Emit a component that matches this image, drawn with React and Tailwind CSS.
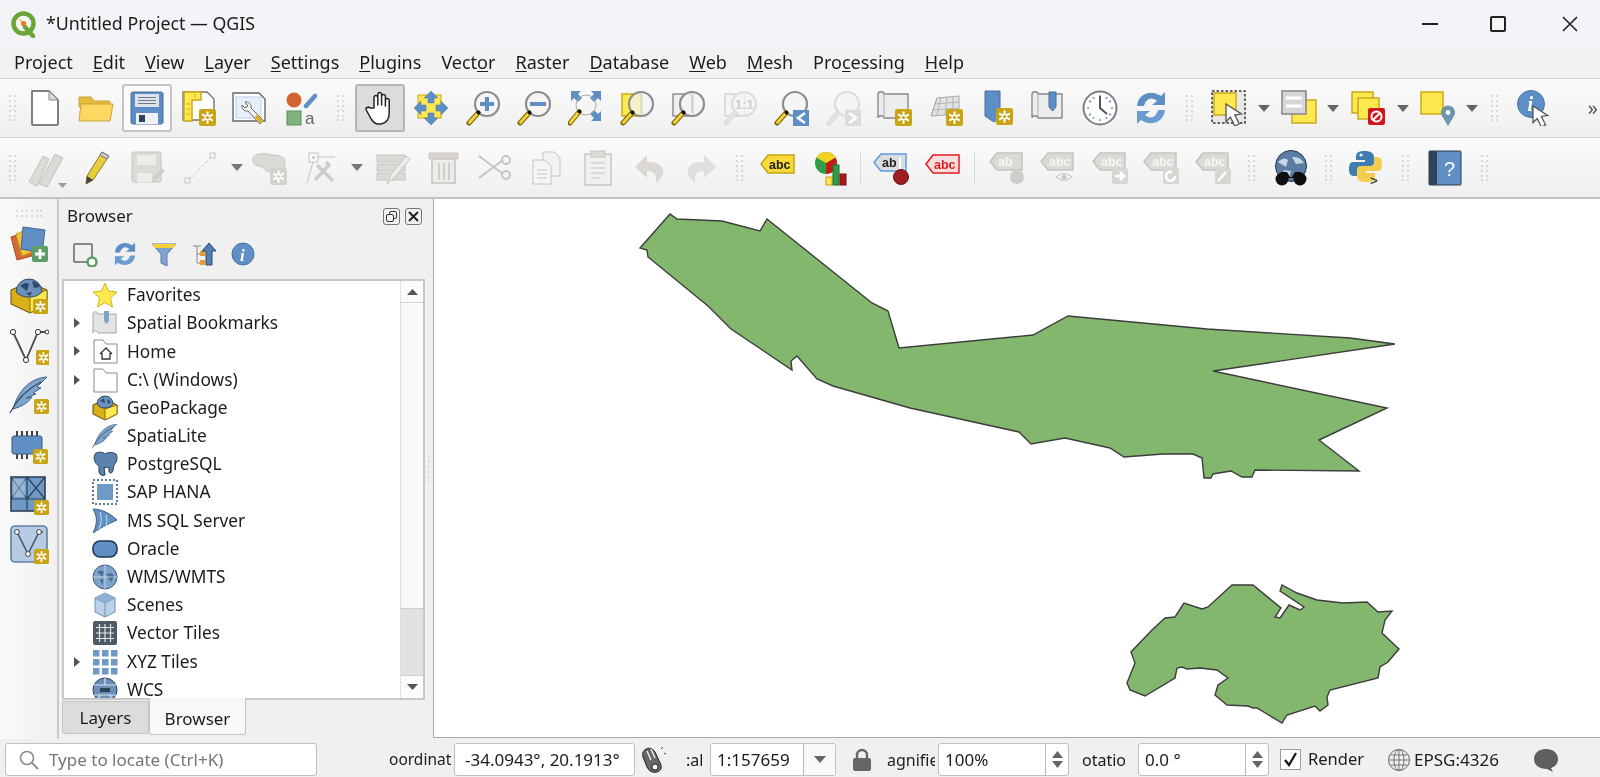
import React from 'react'

const YEL = '#fde84f'
const YEDGE = '#c7a512'
const GHOST = '#dcdad5'
const GEDGE = '#c6c4bf'

const Svg = ({ s = 36, children }) => (
  <svg width={s} height={s} viewBox={`0 0 ${s} ${s}`} className='block shrink-0'>{children}</svg>
)

// gold square with the white star used on every "new ..." icon
const Badge = ({ x = 19, y = 19, s = 16, c = '#c9a516' }) => (
  <g transform={`translate(${x} ${y}) scale(${s / 16})`}>
    <rect width='16' height='16' rx='2' fill={c} />
    <g stroke='#fff' strokeWidth='2' strokeLinecap='round'>
      <path d='M8 3v10M3.7 5.5l8.6 5M3.7 10.5l8.6-5' />
    </g>
    <circle cx='8' cy='8' r='2' fill={c} stroke='#fff' strokeWidth='1' />
  </g>
)

const Lens = ({ off, children, fill = '#f4f4f4' }) => (
  <g>
    {children}
    <circle cx='22' cy='14' r='12' fill={fill} fillOpacity='0.75' stroke={off ? '#dddcd8' : '#8c8c8c'} strokeWidth='2.2' />
    <path d='M13 23L4 33' stroke={off ? '#dddcd8' : '#7a6500'} strokeWidth='5' strokeLinecap='round' />
    <path d='M12.5 23.5L4.5 32.5' stroke={off ? '#e4e3df' : '#f5cf3c'} strokeWidth='3' strokeLinecap='round' />
    {!off && <circle cx='13.5' cy='22.5' r='2' fill='#111' />}
  </g>
)

const Arrowed = ({ d = '#666' }) => (
  <svg width='12' height='7' viewBox='0 0 12 7' className='block'><path d='M0 0h12L6 7z' fill={d} /></svg>
)

const Grip = () => (
  <svg width='8' height='26' viewBox='0 0 8 26' className='block'>
    {[1, 6, 11, 16, 21, 25].map((y) => [1, 6].map((x) => <circle key={`${x}${y}`} cx={x} cy={y} r='0.9' fill='#c9c9c9' />))}
  </svg>
)

const Globe = ({ s = 36, c = '#6a8fb8', dark = '#28405e' }) => (
  <Svg s={s}>
    <circle cx={s / 2} cy={s / 2} r={s / 2 - 1} fill={c} stroke={dark} strokeWidth='1' />
    <path d={`M${s * 0.2} ${s * 0.3}q${s * 0.15} -${s * 0.12} ${s * 0.25} 0l-${s * 0.05} ${s * 0.2}zM${s * 0.55} ${s * 0.4}q${s * 0.2} -${s * 0.1} ${s * 0.3} ${s * 0.05}l-${s * 0.12} ${s * 0.25}zM${s * 0.3} ${s * 0.6}l${s * 0.14} 0l-${s * 0.04} ${s * 0.22}z`} fill={dark} opacity='0.75' />
    <path d={`M1 ${s / 2}h${s - 2}M${s / 2} 1v${s - 2}`} stroke='#dbe6f2' strokeWidth='0.7' />
  </Svg>
)

const Tag = ({ x = 4, y = 8, w = 30, h = 16, fill, stroke, text, tc }) => (
  <g>
    <path d={`M${x} ${y + h / 2}l7 -${h / 2}h${w - 7}v${h}h-${w - 7}z`} fill={fill} stroke={stroke} strokeWidth='1.5' />
    <text x={x + 8} y={y + h - 4} fontSize='12.5' fontWeight='700' fontFamily='"Liberation Sans", sans-serif' fill={tc}>{text}</text>
  </g>
)

const Cursor = ({ x = 18, y = 16, s = 1 }) => (
  <path transform={`translate(${x} ${y}) scale(${s})`} d='M0 0l14 9-6 1 4 8-4 2-4-8-4 4z' fill='#fff' stroke='#555' strokeWidth='1.2' />
)

const DocIcon = () => (
  <Svg>
    <path d='M5 1h17l9 9v24a1 1 0 0 1-1 1H6a1 1 0 0 1-1-1z' fill='#fff' stroke='#5a5a5a' strokeWidth='1.5' />
    <path d='M22 1v9h9z' fill='#d9d9d9' stroke='#8a8a8a' />
  </Svg>
)
const FolderIcon = () => (
  <Svg>
    <path d='M1 7h12l3 4h16v6H1z' fill='#e4bb3a' stroke='#c9a63a' />
    <path d='M3 14h32l-3 17H1z' fill='#fbd960' stroke='#c9a63a' />
  </Svg>
)
const FloppyIcon = () => (
  <Svg>
    <rect x='2' y='2' width='32' height='32' rx='2' fill='#5d8dc4' stroke='#4a6f9b' />
    <rect x='6' y='4' width='24' height='13' fill='#dfe3e8' />
    <path d='M9 7.5h18M9 10.5h18M9 13.5h18' stroke='#6d7a88' />
    <rect x='7' y='23' width='22' height='11' fill='#eef0f3' />
    <rect x='10' y='25' width='6' height='7' fill='#2e435c' />
  </Svg>
)
const LayoutIcon = () => (
  <Svg>
    <path d='M2 2h24l7 7v21H2z' fill='#fff' stroke='#777' strokeWidth='1.4' />
    <path d='M3 2h17v8H11v21H3z' fill={YEL} stroke={YEDGE} strokeWidth='1.4' />
    <path d='M6 14h3M6 19h3M6 24h3M14 4v3' stroke={YEDGE} />
    <Badge x='18' y='19' s='17' />
  </Svg>
)
const StyleIcon = () => (
  <Svg>
    <path d='M1 3h26l6 6v22H1z' fill='#fff' stroke='#666' strokeWidth='1.4' />
    <rect x='4' y='7' width='25' height='21' fill='#e6effa' stroke='#b9d0ea' />
    <path d='M13 12a5 5 0 0 1 6 6l12 12-3 4-12-13a5 5 0 0 1-6-6l3 3 3-2z' fill='#f3f3f3' stroke='#666' />
    <path d='M24 26l6 6' stroke='#d8b22e' strokeWidth='4' />
  </Svg>
)
const SymbolIcon = () => (
  <Svg>
    <circle cx='10' cy='10' r='7.5' fill='#d4632f' />
    <path d='M22 16l9-10' stroke='#5f8fc4' strokeWidth='4.5' strokeLinecap='round' />
    <rect x='3' y='21' width='14' height='14' fill='#7fb27c' stroke='#5e925b' />
    <text x='21' y='34' fontSize='17' fill='#666' fontFamily='"Liberation Sans", sans-serif'>a</text>
  </Svg>
)
const HandIcon = () => (
  <Svg>
    <path d='M12 18V7a2 2 0 0 1 3.8 0v8-11a2 2 0 0 1 3.8 0v11-9a2 2 0 0 1 3.8 0v10-6a2 2 0 0 1 3.8 0v13c0 7-3 10-8 11h-3c-3 0-5-2-7-5l-5-9c-1-2 2-4 4-2z' fill='#fff' stroke='#222' strokeWidth='1.5' strokeLinejoin='round' />
  </Svg>
)
const PanIcon = () => (
  <Svg>
    <rect x='5' y='5' width='23' height='23' fill={YEL} stroke={YEDGE} />
    <g fill='#5d8fc6' stroke='#4f7aa8' strokeWidth='0.5'>
      <path d='M18 1l7 7h-4v5h-6V8h-4zM18 35l7-7h-4v-5h-6v5h-4zM1 18l7-7v4h5v6H8v4zM35 18l-7-7v4h-5v6h5v4z' />
    </g>
  </Svg>
)
const ZoomInIcon = () => <Svg><Lens /><path d='M22 7v14M15 14h14' stroke='#5d8fc6' strokeWidth='4' /></Svg>
const ZoomOutIcon = () => <Svg><Lens /><path d='M14 14h16' stroke='#5d8fc6' strokeWidth='4' /></Svg>
const ZoomFullIcon = () => (
  <Svg>
    <g fill='#5d8fc6'>
      <path d='M3 1h10l-3 3 4 4-4 4-4-4-3 3zM33 1H23l3 3-4 4 4 4 4-4 3 3zM33 31H23l3-3-4-4 4-4 4 4 3-3z' />
    </g>
    <circle cx='18' cy='15' r='10' fill='none' stroke='#aaa' strokeWidth='1' />
    <path d='M11 22L2 33' stroke='#7a6500' strokeWidth='5' strokeLinecap='round' />
    <path d='M10.5 22.5L2.5 32.5' stroke='#f5cf3c' strokeWidth='3' strokeLinecap='round' />
    <circle cx='11.5' cy='21.5' r='2' fill='#111' />
  </Svg>
)
const ZoomSelIcon = () => <Svg><Lens><rect x='3' y='4' width='20' height='22' fill={YEL} stroke={YEDGE} strokeWidth='1.4' /></Lens><path d='M22 5v18' stroke='#ccc' /></Svg>
const ZoomLayerIcon = () => <Svg><Lens><rect x='3' y='4' width='20' height='22' fill='#eee' stroke='#888' strokeWidth='1.4' /></Lens><path d='M22 5v18' stroke='#bbb' /></Svg>
const Zoom11Icon = () => (
  <Svg>
    <Lens off><rect x='3' y='4' width='20' height='22' fill='#f4f4f4' stroke={GEDGE} /></Lens>
    <text x='13' y='19' fontSize='13' fontWeight='700' fill='#cfcdc8' fontFamily='"Liberation Sans", sans-serif'>1:1</text>
  </Svg>
)
const ZoomLastIcon = () => (
  <Svg>
    <Lens />
    <rect x='20' y='20' width='16' height='16' fill='#5d8fc6' />
    <path d='M32 23l-7 5 7 5' fill='none' stroke='#fff' strokeWidth='2.6' />
  </Svg>
)
const ZoomNextIcon = () => (
  <Svg>
    <Lens off />
    <rect x='20' y='20' width='16' height='16' fill='#dcdcd8' />
    <path d='M24 23l7 5-7 5' fill='none' stroke='#fff' strokeWidth='2.6' />
  </Svg>
)
const NewMapIcon = () => (
  <Svg>
    <path d='M2 4c0-3 6-3 6 0h24v24H8c0-3-6-3-6 0z' fill='#ededed' stroke='#8a8a8a' strokeWidth='1.4' />
    <path d='M8 4v24' stroke='#aaa' />
    <Badge x='19' y='19' s='17' />
  </Svg>
)
const New3dIcon = () => (
  <Svg>
    <path d='M10 8l22-2v18l-28 2z' fill='#e2e2e2' stroke='#aaa' />
    <path d='M4 26L10 8M14 7l-4 18M20 7l-2 18M26 6v18M8 14l24-2M6 20l26-2' stroke='#aaa' strokeWidth='0.8' />
    <Badge x='19' y='19' s='17' />
  </Svg>
)
const BookmarkNewIcon = () => (
  <Svg>
    <path d='M6 1h15v26l-6 5-9-6z' fill='#5d8fc6' stroke='#4a6f9b' />
    <Badge x='17' y='18' s='17' />
  </Svg>
)
const BookmarksIcon = () => (
  <Svg>
    <path d='M2 4c0-3 6-3 6 0h24v24H8c0-3-6-3-6 0z' fill='#ededed' stroke='#8a8a8a' strokeWidth='1.4' />
    <path d='M8 4v24' stroke='#aaa' />
    <path d='M19 2h7v15l-3.5 4-3.5-4z' fill='#5d8fc6' stroke='#4a6f9b' />
  </Svg>
)
const ClockIcon = () => (
  <Svg>
    <circle cx='18' cy='18' r='16.5' fill='#fff' stroke='#7f7f7f' strokeWidth='2' />
    <path d='M18 5v2M18 29v2M5 18h2M29 18h2M11 7l1 2M25 7l-1 2M7 11l2 1M29 11l-2 1M7 25l2-1M29 25l-2-1M11 29l1-2M25 29l-1-2' stroke='#6a96c6' strokeWidth='1.4' />
    <path d='M18 6v12l7 6' fill='none' stroke='#555' strokeWidth='2' />
  </Svg>
)
const RefreshIcon = ({ s = 36 }) => (
  <Svg s={s}>
    <g transform={`scale(${s / 36})`}>
      <path d='M4 16C5 7 12 2 20 3c3 0 6 2 8 3l4-4v13H19l5-4c-6-5-11-2-13 5z' fill='#5d8fc6' />
      <path d='M32 20c-1 9-8 14-16 13-3 0-6-2-8-3l-4 4V21h13l-5 4c6 5 11 2 13-5z' fill='#6a9bd1' />
    </g>
  </Svg>
)
const SelectIcon = () => (
  <Svg>
    <rect x='1' y='1' width='33' height='32' fill='#e8e8e8' stroke='#333' strokeWidth='1.5' strokeDasharray='2.5 2' />
    <rect x='3' y='3' width='22' height='22' fill={YEL} stroke={YEDGE} strokeWidth='1.4' />
    <Cursor x='15' y='14' s='1.1' />
  </Svg>
)
const AttrIcon = () => (
  <Svg>
    <rect x='11' y='10' width='24' height='23' fill={YEL} stroke={YEDGE} strokeWidth='1.4' />
    <rect x='1' y='1' width='24' height='23' fill='#d6d6d6' stroke='#8a8a8a' strokeWidth='1.6' />
    <path d='M5 8h16M5 16h16' stroke='#fff' strokeWidth='3' />
  </Svg>
)
const DeselectIcon = () => (
  <Svg>
    <rect x='2' y='2' width='21' height='21' fill={YEL} stroke={YEDGE} strokeWidth='1.4' />
    <rect x='8' y='8' width='21' height='21' fill={YEL} stroke={YEDGE} strokeWidth='1.4' />
    <rect x='18' y='18' width='17' height='17' rx='2' fill='#d0171e' />
    <circle cx='26.5' cy='26.5' r='5' fill='none' stroke='#fff' strokeWidth='2' />
    <path d='M23 30l7-7' stroke='#fff' strokeWidth='2' />
  </Svg>
)
const LocationIcon = () => (
  <Svg>
    <rect x='2' y='2' width='22' height='22' fill={YEL} stroke={YEDGE} strokeWidth='1.4' />
    <path d='M29 36l-6-10a7 7 0 1 1 12 0z' fill='#6e93ad' />
    <circle cx='29' cy='22.5' r='2.4' fill='#fff' />
  </Svg>
)
const InfoIcon = () => (
  <Svg>
    <circle cx='15' cy='14' r='13.5' fill='#5d8fc6' stroke='#4a74a3' />
    <text x='11.5' y='21' fontSize='20' fontWeight='700' fontStyle='italic' fill='#fff' fontFamily='"Liberation Serif", serif'>i</text>
    <Cursor x='17' y='16' s='1.05' />
  </Svg>
)

// second toolbar
const PencilsIcon = () => (
  <Svg s={44}>
    <path d='M6 36l14-26 6 3-12 27z' fill={GHOST} stroke={GEDGE} />
    <path d='M16 38l16-30 8 4-16 29z' fill={GHOST} stroke={GEDGE} />
    <path d='M35 37h9l-4.500 5z' fill='#9a9a9a' />
  </Svg>
)
const PencilIcon = () => (
  <Svg>
    <path d='M24 2l7 4-16 24-7 4 1-8z' fill='#e6cf3d' stroke='#8c7d1c' />
    <path d='M24 2l7 4-2 3-7-4z' fill='#ccc' stroke='#777' />
    <path d='M8 34l1-8 6 4z' fill='#444' />
  </Svg>
)
const SaveEditsIcon = () => (
  <Svg>
    <rect x='3' y='2' width='29' height='30' rx='2' fill={GHOST} stroke={GEDGE} />
    <rect x='8' y='5' width='19' height='10' fill='#ececea' />
    <rect x='8' y='23' width='15' height='9' fill='#ececea' />
    <path d='M23 33l2-7 8-8 3 3-8 8z' fill='#cfcdc8' />
  </Svg>
)
const DigitizeIcon = () => (
  <Svg>
    <path d='M5 31L29 6' stroke={GEDGE} strokeDasharray='3 2' />
    <rect x='2' y='28' width='5' height='5' fill='#f4f4f4' stroke={GEDGE} />
    <rect x='27' y='3' width='5' height='5' fill='#f4f4f4' stroke={GEDGE} />
  </Svg>
)
const PolygonIcon = () => (
  <Svg>
    <path d='M1 8c2-5 12-5 18-3 8 0 15 1 14 9-1 8-5 7-12 8-10 1-8-6-14-6-4 0-7-3-6-8z' fill={GHOST} stroke={GEDGE} />
    <Badge x='18' y='18' s='17' c='#d3d1cb' />
  </Svg>
)
const VertexIcon = () => (
  <Svg>
    <rect x='6' y='3' width='9' height='9' fill='none' stroke={GEDGE} />
    <circle cx='10.5' cy='7.5' r='1.5' fill={GEDGE} />
    <path d='M15 7h17M10 12L4 33' stroke={GEDGE} />
    <path d='M14 15l16 16M12 30l14-15-3-3' fill='none' stroke='#cfcdc8' strokeWidth='3.5' />
  </Svg>
)
const EditTableIcon = () => (
  <Svg>
    <path d='M2 5h28v7H2zM2 14h28v7H2zM2 23h28v7H2z' fill={GHOST} stroke={GEDGE} />
    <path d='M12 34l4-10 15-18 4 3-15 18z' fill='#ececea' stroke={GEDGE} />
  </Svg>
)
const TrashIcon = () => (
  <Svg>
    <path d='M3 3h29v6H3z' fill='#d9d4cf' stroke='#cdc7c2' />
    <path d='M6 9h23v24H6z' fill='#ececea' stroke='#d3cdc8' strokeWidth='2' />
    <path d='M13 13v17M18 13v17M23 13v17' stroke='#d3cdc8' strokeWidth='2' />
  </Svg>
)
const CutIcon = () => (
  <Svg>
    <path d='M2 6l24 18M2 28l24-18' stroke={GEDGE} strokeWidth='2' />
    <circle cx='29' cy='10' r='4' fill='none' stroke={GEDGE} strokeWidth='2' />
    <circle cx='29' cy='25' r='4' fill='none' stroke={GEDGE} strokeWidth='2' />
  </Svg>
)
const CopyIcon = () => (
  <Svg>
    <path d='M14 2h11l6 6v18H14z' fill='#f2f2f0' stroke={GEDGE} />
    <path d='M4 10h12l6 6v18H4z' fill='#f6f6f4' stroke={GEDGE} />
    <path d='M8 20h10M8 24h10M8 28h10' stroke={GEDGE} />
  </Svg>
)
const PasteIcon = () => (
  <Svg>
    <rect x='5' y='4' width='26' height='31' fill='#f0f0ee' stroke={GEDGE} strokeWidth='1.4' />
    <rect x='11' y='1' width='14' height='6' fill={GHOST} stroke={GEDGE} />
    <path d='M11 13h14M11 18h14M11 23h14M11 28h9' stroke={GEDGE} />
  </Svg>
)
const UndoIcon = ({ flip }) => (
  <Svg>
    <g transform={flip ? 'translate(36 0) scale(-1 1)' : undefined}>
      <path d='M15 5L3 17l12 11v-7c7 0 10 3 9 12 7-6 9-11 6-16-3-4-8-5-15-5z' fill={flip ? '#dfe0dc' : '#dbd7d2'} />
    </g>
  </Svg>
)
const YellowTagIcon = () => <Svg><Tag x={1} y={5} w={33} h={18} fill='#f7d93a' stroke='#c7a512' text='abc' tc='#222' /></Svg>
const DiagramIcon = () => (
  <Svg>
    <circle cx='14' cy='13' r='11' fill='#2f9e44' />
    <path d='M14 13l9.500-5.500A11 11 0 0 1 14 24z' fill='#c01c1c' />
    <path d='M14 2a11 11 0 0 1 9.5 5.5L14 13 4.5 7.5A11 11 0 0 1 14 2z' fill='#f5d21f' />
    <rect x='14' y='27' width='6' height='8' fill={YEL} stroke='#d39a14' />
    <rect x='21' y='15' width='6' height='20' fill='#2f9e44' stroke='#1e6d2e' />
    <rect x='28' y='24' width='6' height='11' fill='#b01818' stroke='#7a0f0f' />
  </Svg>
)
const PinTagIcon = () => (
  <Svg>
    <Tag x={1} y={4} w={32} h={17} fill='#dcdde0' stroke='#5d9ae0' text='ab' tc='#222' />
    <path d='M27 8v11' stroke='#fff' strokeWidth='2' />
    <circle cx='28' cy='27' r='7.5' fill='#9c1f1f' stroke='#701010' />
  </Svg>
)
const RedTagIcon = () => <Svg><Tag x={1} y={5} w={33} h={18} fill='#f9dede' stroke='#e21b22' text='abc' tc='#e21b22' /></Svg>

const GhostTag = ({ text = 'abc', children }) => (
  <Svg>
    <Tag x={1} y={3} w={32} h={17} fill={GHOST} stroke={GEDGE} text={text} tc='#f6f6f4' />
    {children}
  </Svg>
)
const MarkBox = ({ d }) => (
  <g>
    <rect x='20' y='18' width='16' height='16' rx='2' fill='#d8d6d1' />
    <path d={d} fill='none' stroke='#fff' strokeWidth='2.6' />
  </g>
)
const BinocularIcon = () => (
  <Svg>
    <circle cx='18' cy='16' r='15.5' fill='#5c7da3' stroke='#27384e' />
    <path d='M5 12q6-6 10-2l-2 7zM19 7q8-1 12 6l-8 1zM10 20l8 1-2 7z' fill='#dbe6f2' opacity='0.85' />
    <circle cx='9' cy='29' r='6.5' fill='#0f0f0f' />
    <circle cx='27' cy='29' r='6.5' fill='#0f0f0f' />
    <path d='M8 22h6l3 5h2l3-5h6l2 6H6z' fill='#0f0f0f' />
  </Svg>
)
const PythonIcon = () => (
  <Svg>
    <path d='M16 1c-7 0-9 2-9 6v3h9v2H4c-3 0-4 3-4 7s1 7 5 7h3v-5c0-3 2-4 5-4h8c3 0 4-2 4-4V7c0-4-4-6-9-6z' fill='#3f7db0' />
    <path d='M17 32c7 0 9-2 9-6v-3h-9v-2h12c3 0 4-3 4-7s-1-7-5-7h-3v5c0 3-2 4-5 4h-8c-3 0-4 2-4 4v6c0 4 4 6 9 6z' fill='#f3cd4e' />
    <circle cx='12' cy='5' r='1.6' fill='#fff' />
    <text x='21' y='35' fontSize='13' fontWeight='700' fill='#444' fontFamily='"Liberation Mono", monospace'>&gt;</text>
  </Svg>
)
const HelpIcon = () => (
  <Svg>
    <rect x='2' y='1' width='32' height='34' rx='1' fill='#5f8fc4' stroke='#2b3b4e' />
    <rect x='2' y='1' width='8' height='34' fill='#2f4257' />
    <text x='17' y='26' fontSize='20' fill='#fff' fontFamily='"Liberation Sans", sans-serif'>?</text>
  </Svg>
)

// left vertical toolbar
const AddLayersIcon = () => (
  <Svg s={40}>
    <path d='M2 12l18-6 6 24-18 5z' fill='#d76a33' stroke='#a54e22' />
    <path d='M7 9l15-6 6 22-15 6z' fill='#f0c43c' stroke='#c39a1f' />
    <path d='M14 2l22 3-3 23-21-4z' fill='#5f8fc4' stroke='#40688f' />
    <rect x='23' y='21' width='16' height='16' rx='2' fill='#5d9e67' />
    <path d='M31 24v10M26 29h10' stroke='#fff' strokeWidth='3' />
  </Svg>
)
const DataSourceIcon = ({ s = 40, badge = true }) => (
  <Svg s={s}>
    <g transform={`scale(${s / 40})`}>
      <path d='M2 15l18-8 18 8v14l-17 9-19-9z' fill='#d9ae17' stroke='#5d4d10' />
      <path d='M21 21l17-6v14l-17 9z' fill={YEL} stroke='#8a7516' />
      <path d='M7 17a13 13 0 1 1 26 0c-4 4-8 5-13 5s-9-1-13-5z' fill='#6a90bb' stroke='#2f4a68' />
      <path d='M11 11q5-5 9-2l-2 7zM23 6q6 1 8 6l-6 1zM17 18l6-1-2 4z' fill='#2f4a68' />
      {badge && <Badge x='24' y='24' s='15' />}
    </g>
  </Svg>
)
const VectorIcon = () => (
  <Svg s={40}>
    <path d='M4 7l13 28 12-28 12 0' fill='none' stroke='#4a4a4a' strokeWidth='1.8' />
    <circle cx='4' cy='7' r='2.6' fill='#fff' stroke='#333' />
    <circle cx='17' cy='35' r='2.6' fill='#fff' stroke='#333' />
    <circle cx='29' cy='7' r='2.6' fill='#fff' stroke='#333' />
    <circle cx='38' cy='7' r='2' fill='#fff' stroke='#333' />
    <Badge x='27' y='25' s='15' />
  </Svg>
)
const FeatherIcon = ({ s = 40, badge = true }) => (
  <Svg s={s}>
    <g transform={`scale(${s / 40})`}>
      <path d='M38 2C22 3 10 14 4 34c7-2 14-5 19-12l-6 1 10-4-3-1 8-5-4-1z' fill='#7ea6cd' stroke='#3f6387' />
      <path d='M1 38C8 24 18 14 32 7' stroke='#2b4866' strokeWidth='1.2' fill='none' />
      {badge && <Badge x='25' y='24' s='15' />}
    </g>
  </Svg>
)
const ChipIcon = () => (
  <Svg s={40}>
    <path d='M8 6v6M13 6v6M18 6v6M23 6v6M28 6v6M8 28v6M13 28v6M18 28v6' stroke='#2f2f2f' strokeWidth='1.8' />
    <rect x='3' y='11' width='30' height='18' rx='2' fill='#5f8fc4' stroke='#3c5c80' />
    <Badge x='24' y='24' s='15' />
  </Svg>
)
const MeshIcon = () => (
  <Svg s={40}>
    <rect x='2' y='2' width='34' height='34' fill='#6f99c7' stroke='#2d4257' strokeWidth='1.6' />
    <path d='M2 24h34M18 2v34M2 2l16 22M18 2L2 24M36 2L18 24M18 2l18 22' stroke='#2d4257' strokeWidth='1.2' />
    <rect x='4' y='4' width='12' height='18' fill='#e6eef6' opacity='0.35' />
    <Badge x='25' y='25' s='15' />
  </Svg>
)
const VirtualIcon = () => (
  <Svg s={40}>
    <rect x='2' y='1' width='36' height='36' rx='4' fill='#b5cbe3' stroke='#5f7f9e' strokeWidth='1.6' />
    <path d='M8 7l11 22L30 7h4' fill='none' stroke='#44586e' strokeWidth='1.6' />
    <circle cx='8' cy='7' r='2.4' fill='#fff' stroke='#444' />
    <circle cx='19' cy='29' r='2.4' fill='#fff' stroke='#444' />
    <circle cx='30' cy='7' r='2.4' fill='#fff' stroke='#444' />
    <Badge x='25' y='24' s='15' />
  </Svg>
)

// browser tree icons
const StarIcon = () => <Svg s={26}><path d='M13 1l3.500 8 8.500 1-6.500 6 2 9-7.500-4.500L5.500 25l2-9L1 10l8.500-1z' fill='#fdea4f' stroke='#d1b21f' /></Svg>
const BookmarkTreeIcon = () => (
  <Svg s={26}>
    <path d='M1 4c0-3 5-3 5 0h18v19H6c0-3-5-3-5 0z' fill='#e4e4e4' stroke='#a8a8a8' />
    <path d='M12 1h5v10l-2.500 3-2.500-3z' fill='#7ea3cd' />
  </Svg>
)
const FolderTree = ({ home }) => (
  <Svg s={26}>
    <path d='M2 2h9l3 4h11v19H2z' fill='#fff' stroke='#8a8a8a' />
    {home && <path d='M8 16l6-6 6 6M10 15v6h8v-6' fill='none' stroke='#333' strokeWidth='1.300' />}
  </Svg>
)
const DbIcon = () => (
  <Svg s={26}>
    <path d='M1 10l12-6 12 6v9l-12 6-12-6z' fill='#d9ae17' stroke='#5d4d10' />
    <path d='M13 14l12-4v9l-12 6z' fill={YEL} stroke='#8a7516' />
    <path d='M5 9a8 8 0 1 1 16 0c-2 3-5 4-8 4s-6-1-8-4z' fill='#6a90bb' stroke='#2f4a68' />
    <path d='M8 6l4-3 1 5zM15 4l4 3-3 2z' fill='#2f4a68' />
  </Svg>
)
const ElephantIcon = () => (
  <Svg s={26}>
    <path d='M4 2c5-2 8 0 9 1 3-2 8-2 11 0 2 3 1 8-2 11l-1 5c0 3-3 4-4 2v-5c-2 1-4 1-5 0l1 8c-3 1-5 0-6-3v-6C3 13 0 6 4 2z' fill='#5a84ae' stroke='#2c435b' />
  </Svg>
)
const HanaIcon = () => (
  <Svg s={26}>
    <rect x='1' y='1' width='24' height='24' fill='none' stroke='#5b7a9c' strokeWidth='2' strokeDasharray='2 2' />
    <rect x='5' y='5' width='16' height='16' fill='#6f99c7' />
  </Svg>
)
const SqlIcon = () => <Svg s={26}><path d='M1 1c9 0 18 5 24 11-6 3-14 6-24 13 4-8 5-16 0-24z' fill='#5f8fc4' stroke='#3d6389' /><path d='M8 4q3 8-1 17M14 7q2 6 0 11' stroke='#cfe0f1' fill='none' /></Svg>
const OracleIcon = () => <Svg s={26}><rect x='1' y='5' width='24' height='16' rx='7' fill='#5f8fc4' stroke='#22364c' strokeWidth='1.600' /></Svg>
const ScenesIcon = () => (
  <Svg s={26}>
    <path d='M13 1l10 5v14l-10 5-10-5V6z' fill='#bcd1e7' stroke='#6a8fb4' />
    <path d='M3 6l10 5 10-5M13 11v14' fill='none' stroke='#6a8fb4' />
    <path d='M13 1l10 5-10 5L3 6z' fill='#8fb0d3' />
  </Svg>
)
const VTilesIcon = () => (
  <Svg s={26}>
    <rect x='1' y='1' width='24' height='24' rx='2' fill='#4e5a66' />
    <path d='M4 7.500h18M4 13h18M4 18.500h18M7.500 4v18M13 4v18M18.500 4v18' stroke='#e6e6e6' strokeWidth='1.200' />
  </Svg>
)
const XyzIcon = () => (
  <Svg s={26}>
    {[1, 10, 19].map((y) => [1, 10, 19].map((x) => <rect key={`${x}${y}`} x={x} y={y} width='6.500' height='6.500' fill='#6f99c7' />))}
  </Svg>
)
const WcsIcon = () => (
  <Svg s={26}>
    <circle cx='13' cy='13' r='12' fill='#6a8fb8' stroke='#2c435b' />
    <path d='M2 8h22M2 18h22M13 1v7M8 18l-2 5M18 18l2 5' stroke='#dbe6f2' strokeWidth='1.200' />
    <rect x='8' y='11' width='10' height='4' fill='#2c435b' />
  </Svg>
)

const QgisLogo = () => (
  <Svg s={28}>
    <circle cx='13.500' cy='13.500' r='10' fill='none' stroke='#69a636' strokeWidth='4.500' />
    <path d='M15 17l8 9' stroke='#69a636' strokeWidth='4.500' strokeLinecap='round' />
    <circle cx='13.500' cy='13.500' r='2.600' fill='#ee7913' />
    <path d='M9 9l3 3' stroke='#f3c04a' strokeWidth='1.200' />
  </Svg>
)

const IconBtn = ({ w = 'w-[51.4px]', state, children }) => (
  <div className={`${w} h-[48px] shrink-0 flex items-center justify-center`}>
    {state === 'on' && <div className='w-[50px] h-[48px] flex items-center justify-center rounded-[3px] bg-[#fbfbfb] border-2 border-[#c4c4c4]'>{children}</div>}
    {state === 'down' && <div className='w-[50px] h-[48px] flex items-center justify-center rounded-[3px] bg-[#dcdcdc] border-2 border-[#b4b4b4]'>{children}</div>}
    {!state && children}
  </div>
)
const GripBox = ({ w }) => <div className={`${w} shrink-0 flex justify-center`}><Grip /></div>
const Drop = ({ w = 'w-[18px]', d }) => <div className={`${w} shrink-0 flex justify-center`}><Arrowed d={d} /></div>
const Sep = ({ w }) => <div className={`${w} shrink-0 flex justify-center`}><div className='w-px h-[32px] bg-[#d8d8d8]' /></div>

const menus = [
  ['', 'Project', ''], ['', 'E', 'dit'], ['', 'V', 'iew'], ['', 'L', 'ayer'], ['', 'S', 'ettings'], ['', 'P', 'lugins'],
  ['Vect', 'o', 'r'], ['', 'R', 'aster'], ['', 'D', 'atabase'], ['', 'W', 'eb'], ['', 'M', 'esh'], ['Pro', 'c', 'essing'], ['', 'H', 'elp'],
]

const tree = [
  [false, <StarIcon />, 'Favorites'],
  [true, <BookmarkTreeIcon />, 'Spatial Bookmarks'],
  [true, <FolderTree home />, 'Home'],
  [true, <FolderTree />, 'C:\\ (Windows)'],
  [false, <DbIcon />, 'GeoPackage'],
  [false, <FeatherIcon s={26} badge={false} />, 'SpatiaLite'],
  [false, <ElephantIcon />, 'PostgreSQL'],
  [false, <HanaIcon />, 'SAP HANA'],
  [false, <SqlIcon />, 'MS SQL Server'],
  [false, <OracleIcon />, 'Oracle'],
  [false, <Globe s={26} c='#7fa3c9' dark='#3e5d7d' />, 'WMS/WMTS'],
  [false, <ScenesIcon />, 'Scenes'],
  [false, <VTilesIcon />, 'Vector Tiles'],
  [true, <XyzIcon />, 'XYZ Tiles'],
  [false, <WcsIcon />, 'WCS'],
]

const Spin = () => (
  <div className='w-[23px] self-stretch border-l border-[#b8b8b8] flex flex-col items-center justify-center gap-[3px]'>
    <svg width='11' height='7' viewBox='0 0 11 7'><path d='M5.500 0L11 7H0z' fill='#666' /></svg>
    <svg width='11' height='7' viewBox='0 0 11 7'><path d='M5.500 7L11 0H0z' fill='#666' /></svg>
  </div>
)

const shape1 = '640,248 670,214 677,219 722,221 760,231 767,219 872,303 888,311 899,348 1033,335 1068,316 1207,329 1350,338 1395,344 1213,371 1387,408 1319,440 1359,471 1255,470 1252,477 1242,477 1231,471 1213,474 1211,478 1204,478 1202,458 1193,454 1163,454 1124,457 1110,448 1065,438 1031,444 1019,432 910,408 833,386 817,379 797,356 791,361 792,370 731,329 708,306 648,257 647,250'
const shape2 = '1232,585 1253,585 1281,608 1275,617 1280,618 1289,605 1300,610 1304,607 1280,591 1282,585 1297,593 1317,600 1343,603 1367,602 1378,612 1392,611 1385,620 1382,633 1399,649 1388,662 1380,667 1378,678 1330,690 1327,697 1328,705 1320,711 1315,706 1287,715 1282,723 1257,708 1253,708 1248,706 1227,705 1215,695 1218,685 1228,678 1217,670 1200,668 1187,669 1182,667 1177,668 1175,678 1145,696 1130,690 1127,683 1135,663 1131,652 1152,630 1165,618 1175,617 1184,603 1202,609 1208,607'

const App = () => {
  return (
    <main className="w-screen h-screen overflow-hidden flex flex-col bg-[#f0f0f0] text-[#1c1c1c] text-[17px] blur-[0.4px] font-['Noto_Sans',sans-serif]">
      <header className='h-[47px] shrink-0 bg-[#f3f4f8] flex items-center'>
        <div className='ml-[10px]'><QgisLogo /></div>
        <h1 className='ml-[8px] text-[17.8px] font-normal'>*Untitled Project — QGIS</h1>
        <div className='ml-auto flex items-center'>
          <div className='w-[16px] h-[2px] bg-[#222] mr-[52px]' />
          <div className='w-[16px] h-[16px] border-2 border-[#222] rounded-[2px] mr-[56px]' />
          <svg width='16' height='16' viewBox='0 0 16 16' className='mr-[22px]'><path d='M1 1l14 14M15 1L1 15' stroke='#222' strokeWidth='1.600' /></svg>
        </div>
      </header>

      <nav className='h-[31px] shrink-0 flex items-center pl-[14px] gap-[20px] text-[18px] bg-[#f2f2f2]'>
        {menus.map(([a, b, c]) => (
          <span key={a + b + c}>{a}<span className={b === 'Project' ? '' : 'underline underline-offset-2'}>{b}</span>{c}</span>
        ))}
      </nav>

      <div className='h-[60px] shrink-0 flex items-center pl-[6px] border-y border-[#d4d4d4] bg-gradient-to-b from-[#fbfbfb] to-[#efefef]'>
        <GripBox w='w-[13px]' />
        <IconBtn><DocIcon /></IconBtn>
        <IconBtn><FolderIcon /></IconBtn>
        <IconBtn state='on'><FloppyIcon /></IconBtn>
        <IconBtn><LayoutIcon /></IconBtn>
        <IconBtn><StyleIcon /></IconBtn>
        <IconBtn><SymbolIcon /></IconBtn>
        <GripBox w='w-[27px]' />
        <IconBtn state='down'><HandIcon /></IconBtn>
        <IconBtn><PanIcon /></IconBtn>
        <IconBtn><ZoomInIcon /></IconBtn>
        <IconBtn><ZoomOutIcon /></IconBtn>
        <IconBtn><ZoomFullIcon /></IconBtn>
        <IconBtn><ZoomSelIcon /></IconBtn>
        <IconBtn><ZoomLayerIcon /></IconBtn>
        <IconBtn><Zoom11Icon /></IconBtn>
        <IconBtn><ZoomLastIcon /></IconBtn>
        <IconBtn><ZoomNextIcon /></IconBtn>
        <IconBtn><NewMapIcon /></IconBtn>
        <IconBtn><New3dIcon /></IconBtn>
        <IconBtn><BookmarkNewIcon /></IconBtn>
        <IconBtn><BookmarksIcon /></IconBtn>
        <IconBtn><ClockIcon /></IconBtn>
        <IconBtn><RefreshIcon /></IconBtn>
        <GripBox w='w-[27px]' />
        <IconBtn><SelectIcon /></IconBtn>
        <Drop />
        <IconBtn><AttrIcon /></IconBtn>
        <Drop />
        <IconBtn><DeselectIcon /></IconBtn>
        <Drop />
        <IconBtn><LocationIcon /></IconBtn>
        <Drop />
        <GripBox w='w-[27px]' />
        <IconBtn><InfoIcon /></IconBtn>
        <span className='ml-auto mr-[2px] text-[20px] text-[#555]'>»</span>
      </div>

      <div className='h-[61px] shrink-0 flex items-center pl-[6px] border-b-2 border-[#c4c4c4] bg-gradient-to-b from-[#fbfbfb] to-[#efefef]'>
        <GripBox w='w-[13px]' />
        <IconBtn><PencilsIcon /></IconBtn>
        <IconBtn><PencilIcon /></IconBtn>
        <IconBtn><SaveEditsIcon /></IconBtn>
        <IconBtn w='w-[56px]'><DigitizeIcon /></IconBtn>
        <Drop w='w-[15px]' d='#777' />
        <IconBtn><PolygonIcon /></IconBtn>
        <IconBtn><VertexIcon /></IconBtn>
        <Drop w='w-[20px]' d='#777' />
        <IconBtn><EditTableIcon /></IconBtn>
        <IconBtn><TrashIcon /></IconBtn>
        <IconBtn><CutIcon /></IconBtn>
        <IconBtn><CopyIcon /></IconBtn>
        <IconBtn><PasteIcon /></IconBtn>
        <IconBtn><UndoIcon /></IconBtn>
        <IconBtn><UndoIcon flip /></IconBtn>
        <GripBox w='w-[26px]' />
        <IconBtn><YellowTagIcon /></IconBtn>
        <IconBtn><DiagramIcon /></IconBtn>
        <Sep w='w-[10px]' />
        <IconBtn><PinTagIcon /></IconBtn>
        <IconBtn><RedTagIcon /></IconBtn>
        <Sep w='w-[13px]' />
        <IconBtn><GhostTag text='ab'><circle cx='28' cy='27' r='7' fill='#d0cecb' /></GhostTag></IconBtn>
        <IconBtn><GhostTag><path d='M16 27q8-7 16 0q-8 7-16 0z' fill='#f4f4f2' stroke={GEDGE} /><circle cx='24' cy='27' r='2.500' fill={GEDGE} /></GhostTag></IconBtn>
        <IconBtn><GhostTag><MarkBox d='M23 26h8M28 22l4 4-4 4' /></GhostTag></IconBtn>
        <IconBtn><GhostTag><MarkBox d='M32 26a4.500 4.500 0 1 1-3-4' /></GhostTag></IconBtn>
        <IconBtn><GhostTag><MarkBox d='M23 31l8-9' /></GhostTag></IconBtn>
        <GripBox w='w-[27px]' />
        <IconBtn><BinocularIcon /></IconBtn>
        <GripBox w='w-[25px]' />
        <IconBtn><PythonIcon /></IconBtn>
        <GripBox w='w-[26px]' />
        <IconBtn><HelpIcon /></IconBtn>
        <GripBox w='w-[29px]' />
      </div>

      <section className='flex-1 min-h-0 flex'>
        <aside className='w-[59px] shrink-0 border-r-2 border-[#c9c9c9] bg-gradient-to-r from-[#fafafa] to-[#f0f0f0] flex flex-col items-center pt-[11px]'>
          <svg width='26' height='8' viewBox='0 0 26 8' className='block mb-[7px]'>
            {[1, 6, 11, 16, 21, 25].map((x) => [1, 6].map((y) => <circle key={`${x}${y}`} cx={x} cy={y} r='0.900' fill='#c9c9c9' />))}
          </svg>
          <div className='flex flex-col gap-[10px]'>
            <AddLayersIcon />
            <DataSourceIcon />
            <VectorIcon />
            <FeatherIcon />
            <ChipIcon />
            <MeshIcon />
            <VirtualIcon />
          </div>
        </aside>

        <div className='w-[366px] shrink-0 flex flex-col pl-[3px] pt-[1px]'>
          <div className='h-[30px] flex items-center pl-[5px] mt-[1px]'>
            <span>Browser</span>
            <div className='ml-auto flex gap-[5px] mr-[3px]'>
              <div className='w-[17px] h-[17px] border border-[#777] rounded-[3px] flex items-center justify-center'>
                <svg width='11' height='11' viewBox='0 0 11 11'><rect x='3.500' y='0.500' width='7' height='7' rx='1.500' fill='none' stroke='#333' /><rect x='0.500' y='3.500' width='7' height='7' rx='1.500' fill='#f0f0f0' stroke='#333' /></svg>
              </div>
              <div className='w-[17px] h-[17px] border border-[#777] rounded-[3px] flex items-center justify-center'>
                <svg width='11' height='11' viewBox='0 0 11 11'><path d='M1 1l9 9M10 1l-9 9' stroke='#222' strokeWidth='2' /></svg>
              </div>
            </div>
          </div>
          <div className='h-[46px] mb-[2px] shrink-0 flex items-center pl-[10px] gap-[13.5px]'>
            <Svg s={26}><rect x='2' y='3' width='18' height='18' rx='1' fill='none' stroke='#666' strokeWidth='1.500' /><circle cx='20' cy='21' r='4.500' fill='#fff' stroke='#5d9e67' strokeWidth='2.500' /></Svg>
            <RefreshIcon s={26} />
            <Svg s={26}><path d='M1 3h24l-9 10v12l-6-3V13z' fill='#7ea3cd' stroke='#567aa3' /><path d='M1 3h24l-3 4H4z' fill='#f2d13a' /></Svg>
            <Svg s={26}><path d='M2 5h8M6 5v17h6M6 13h6' stroke='#888' fill='none' /><rect x='9' y='10' width='5' height='5' fill='#ee9a2e' /><rect x='9' y='19' width='5' height='5' fill='#ee9a2e' /><path d='M18 2l7 8h-4v14h-6V10h-4z' fill='#4f7fb3' stroke='#2e4a6b' /></Svg>
            <Svg s={26}><circle cx='13' cy='13' r='11' fill='#5f8fc4' stroke='#4a74a3' /><text x='10' y='20' fontSize='17' fontWeight='700' fontStyle='italic' fill='#fff' fontFamily='"Liberation Serif", serif'>i</text></Svg>
          </div>
          <div className='h-[421px] shrink-0 flex border-2 border-[#c8c8c8] bg-white overflow-hidden'>
            <ul className='flex-1 min-w-0 text-[17.3px]'>
              {tree.map(([arrow, icon, label]) => (
                <li key={label} className='h-[28.2px] flex items-center text-[#1c1c1c]'>
                  <div className='w-[28px] shrink-0 flex justify-end pr-[12px]'>
                    {arrow && <svg width='6' height='10' viewBox='0 0 6 10'><path d='M0 0l6 5-6 5z' fill='#555' /></svg>}
                  </div>
                  <div className='w-[35px] shrink-0'>{icon}</div>
                  <span>{label}</span>
                </li>
              ))}
            </ul>
            <div className='w-[23px] shrink-0 border-l border-[#e0e0e0] flex flex-col bg-gradient-to-r from-[#f6f6f6] to-[#fdfdfd]'>
              <div className='h-[22px] shrink-0 flex items-center justify-center border-b border-[#d4d4d4] bg-[#fbfbfb]'>
                <svg width='11' height='6' viewBox='0 0 11 6'><path d='M5.500 0L11 6H0z' fill='#555' /></svg>
              </div>
              <div className='flex-1' />
              <div className='h-[68px] shrink-0 bg-[#e2e2e2] border-y border-[#cfcfcf]' />
              <div className='h-[22px] shrink-0 flex items-center justify-center bg-[#fbfbfb]'>
                <svg width='11' height='6' viewBox='0 0 11 6'><path d='M5.500 6L11 0H0z' fill='#555' /></svg>
              </div>
            </div>
          </div>
          <div className='flex items-start'>
            <div className='w-[87px] h-[33px] mt-[1px] flex items-center justify-center bg-[#dcdcdc] border border-[#c4c4c4] rounded-b-[3px]'>Layers</div>
            <div className='w-[97px] h-[37px] -mt-[2px] pt-[5px] flex items-center justify-center bg-[#f8f8f8] border border-[#c4c4c4] border-t-0 rounded-b-[3px]'>Browser</div>
          </div>
        </div>

        <div className='w-[8px] shrink-0 flex items-center justify-center'>
          <svg width='4' height='27' viewBox='0 0 4 27'>
            {[1, 6, 11, 16, 21, 26].map((y) => <circle key={y} cx='2' cy={y} r='0.800' fill='#c4c4c4' />)}
          </svg>
        </div>

        <div className='flex-1 min-w-0 bg-white border-l border-b border-[#aaa] mb-[1px]'>
          <svg className='block w-full h-full' viewBox='434 199 1166 538' preserveAspectRatio='none'>
            <polygon points={shape1} fill='#84b76e' stroke='#3c3c3c' strokeWidth='1.400' />
            <polygon points={shape2} fill='#84b76e' stroke='#3c3c3c' strokeWidth='1.400' />
          </svg>
        </div>
      </section>

      <footer className='h-[38px] shrink-0 flex items-start pt-[4px] pl-[5px] pr-[6px] bg-[#f0f0f0]'>
        <div className='w-[312px] h-[33px] flex items-center bg-white border border-[#c0c0c0] rounded-[3px] pl-[12px] text-[#757575]'>
          <svg width='22' height='22' viewBox='0 0 22 22'><circle cx='9' cy='9' r='6.500' fill='none' stroke='#8a8a8a' strokeWidth='1.600' /><path d='M14 14l6 6' stroke='#8a8a8a' strokeWidth='1.800' /></svg>
          <span className='ml-[9px]'>Type to locate (Ctrl+K)</span>
        </div>
        <div className='h-[33px] flex items-center'>
          <span className='ml-[72px] w-[64px] overflow-hidden whitespace-nowrap text-[15.5px]'>oordinat</span>
          <div className='ml-[1px] w-[181px] h-[33px] flex items-center bg-white border border-[#c0c0c0] rounded-[3px] pl-[10px]'>-34.0943°, 20.1913°</div>
          <div className='ml-[2px] w-[30px] flex justify-center'>
            <Svg s={28}>
              <path d='M8 3c4-2 8 0 10 5l5 11c1 4-1 6-4 7-5 1-8-1-10-5L5 11C4 7 5 5 8 3z' fill='#666' stroke='#222' />
              <path d='M9 5l4 9M13 3l4 9' stroke='#eee' strokeWidth='1.400' />
              <circle cx='17' cy='21' r='3' fill='#fff' stroke='#222' />
              <path d='M23 3l2-2M26 8l2-1' stroke='#444' />
            </Svg>
          </div>
          <span className='ml-[19px] w-[18px] overflow-hidden whitespace-nowrap text-[16px]'>:al</span>
          <div className='ml-[6px] w-[126px] h-[33px] flex items-center bg-white border border-[#c0c0c0] rounded-[3px] pl-[6px]'>
            <span className='flex-1'>1:157659</span>
            <div className='w-[32px] self-stretch border-l border-[#b8b8b8] bg-[#f8f8f8] flex items-center justify-center'><Arrowed /></div>
          </div>
          <div className='ml-[16px] w-[20px] flex justify-center'>
            <svg width='20' height='24' viewBox='0 0 20 24'><path d='M5 11V7a5 5 0 0 1 10 0v4' fill='none' stroke='#666' strokeWidth='2.400' /><rect x='1' y='10' width='18' height='13' rx='2' fill='#666' /></svg>
          </div>
          <span className='ml-[15px] w-[48px] overflow-hidden whitespace-nowrap text-[16px]'>agnifie</span>
          <div className='ml-[3px] w-[131px] h-[33px] flex items-center bg-white border border-[#c0c0c0] rounded-[3px] pl-[6px]'>
            <span className='flex-1'>100%</span>
            <Spin />
          </div>
          <span className='ml-[13px] w-[44px] overflow-hidden whitespace-nowrap text-[16px]'>otatio</span>
          <div className='ml-[12px] w-[131px] h-[33px] flex items-center bg-white border border-[#c0c0c0] rounded-[3px] pl-[6px]'>
            <span className='flex-1'>0.0 °</span>
            <Spin />
          </div>
          <div className='ml-[11px] w-[21px] h-[21px] flex items-center justify-center bg-white border border-[#9a9a9a]'>
            <svg width='15' height='15' viewBox='0 0 15 15'><path d='M2 8l4 5 7-12' fill='none' stroke='#111' strokeWidth='2.200' /></svg>
          </div>
          <span className='ml-[7px] text-[16.5px]'>Render</span>
          <div className='ml-[23px]'>
            <Svg s={24}>
              <circle cx='12' cy='12' r='10.500' fill='#eee' stroke='#666' />
              <path d='M2 12h20M12 2v20M4 7h16M4 17h16' stroke='#666' strokeWidth='0.900' />
              <ellipse cx='12' cy='12' rx='5' ry='10.500' fill='none' stroke='#666' strokeWidth='0.900' />
            </Svg>
          </div>
          <span className='ml-[3px]'>EPSG:4326</span>
          <div className='ml-[33px]'>
            <svg width='28' height='26' viewBox='0 0 28 26'><path d='M14 2c7 0 12 4 12 10s-4 8-7 9l2 4-6-3c-8 0-13-4-13-10S7 2 14 2z' fill='#5f5f5f' /></svg>
          </div>
        </div>
      </footer>
    </main>
  )
}

export default App
